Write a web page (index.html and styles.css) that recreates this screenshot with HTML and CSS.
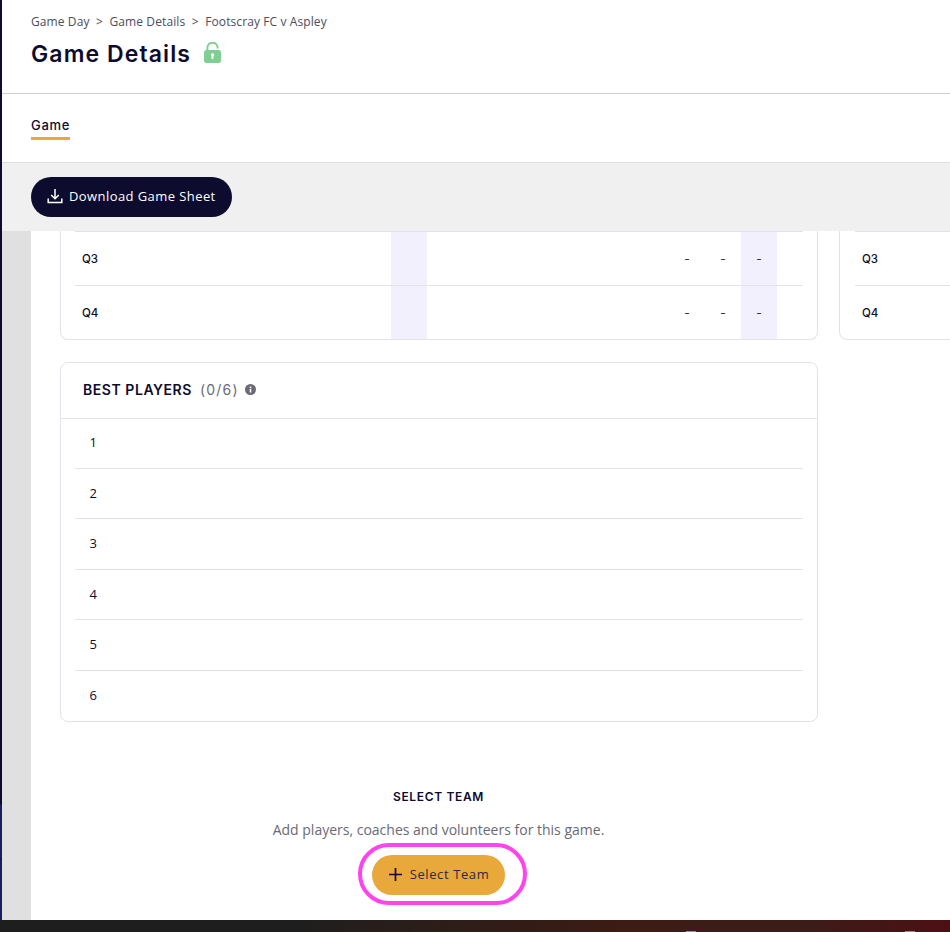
FILE: index.html
```html
<!DOCTYPE html>
<html lang="en">
<head>
<meta charset="utf-8">
<title>Game Details</title>
<link rel="stylesheet" href="styles.css">
</head>
<body>
<div class="window">
  <div class="rail"></div>
  <main class="page">
    <header class="head">
      <nav class="crumbs"><span>Game Day</span><span class="sep">&gt;</span><span>Game Details</span><span class="sep">&gt;</span><span>Footscray FC v Aspley</span></nav>
      <div class="title-row">
        <h1>Game Details</h1>
        <svg class="lock" width="17" height="21" viewBox="0 0 17 21"><path d="M3.4 9V5.8a5.1 5.1 0 0 1 10.2 0V6.5" fill="none" stroke="#7fcf92" stroke-width="2"/><rect x="0" y="8" width="17" height="13" rx="2.5" fill="#7fcf92"/><circle cx="8.5" cy="13" r="1.7" fill="#fff"/><rect x="7.6" y="13" width="1.8" height="4" fill="#fff"/></svg>
      </div>
    </header>
    <div class="tabs"><span class="tab">Game</span></div>
    <div class="toolbar">
      <button class="btn-dark">
        <svg width="16" height="16" viewBox="0 0 16 16" fill="none" stroke="#fff" stroke-width="1.5"><path d="M8 1v9.5M4.2 7 8 10.7 11.8 7M1.2 10.5v4h13.6v-4"/></svg>
        Download Game Sheet
      </button>
    </div>
    <div class="content">
      <div class="gutter"></div>
      <div class="scroll">
        <div class="top-cards">
          <section class="card card-clip score">
            <div class="hl hl-a"></div>
            <div class="hl hl-b"></div>
            <div class="q-row"><b>Q3</b><i>-</i><i>-</i><i>-</i></div>
            <div class="q-row"><b>Q4</b><i>-</i><i>-</i><i>-</i></div>
          </section>
          <section class="card card-clip score-right">
            <div class="q-row"><b>Q3</b></div>
            <div class="q-row"><b>Q4</b></div>
          </section>
        </div>
        <section class="card best">
          <div class="best-head">
            <h2>BEST PLAYERS</h2><span class="count">(0/6)</span>
            <svg width="11" height="11" viewBox="0 0 11 11"><circle cx="5.5" cy="5.5" r="5.5" fill="#6a6a76"/><rect x="4.7" y="4.7" width="1.6" height="3.8" fill="#fff"/><rect x="4.7" y="2.5" width="1.6" height="1.5" fill="#fff"/></svg>
          </div>
          <ol class="best-list">
            <li>1</li><li>2</li><li>3</li><li>4</li><li>5</li><li>6</li>
          </ol>
        </section>
        <section class="select">
          <h3>SELECT TEAM</h3>
          <p>Add players, coaches and volunteers for this game.</p>
          <div class="cta">
            <button class="btn-gold">
              <svg width="15" height="15" viewBox="0 0 15 15" stroke="#0d0c2e" stroke-width="1.7"><path d="M7.5 1v13M1 7.5h13"/></svg>
              Select Team
            </button>
            <div class="ring"></div>
          </div>
        </section>
      </div>
    </div>
  </main>
</div>
<div class="taskbar"><span class="spot spot-a"></span><span class="spot spot-b"></span></div>
</body>
</html>
```
FILE: styles.css
```css
* { box-sizing: border-box; }
html, body { margin: 0; height: 932px; overflow: hidden; background: #fff; }
body { font-family: "Open Sans", "Noto Sans", sans-serif; color: #0d0c2e; }
.window { display: flex; height: 920px; }
.rail { width: 2px; flex: none; background: linear-gradient(#0d0c2e 0, #0d0c2e 804px, #1e1e5c 805px, #1e1e5c 858px, #12123c 859px, #1e1e5c 860px); }
.page { flex: 1; min-width: 0; display: flex; flex-direction: column; }
.head { height: 94px; border-bottom: 1px solid #cfcfcf; padding: 14px 0 0 29px; }
.crumbs { display: flex; font-size: 12px; line-height: 16px; letter-spacing: .1px; color: #4c4c5c; }
.sep { margin: 0 6.5px; }
.title-row { display: flex; align-items: center; gap: 13px; margin-top: 8px; }
h1 { margin: 0; font: 600 23px/32px Inter, sans-serif; letter-spacing: 1.1px; }
.lock { margin-top: -3px; }
.tabs { height: 69px; border-bottom: 1px solid #dedede; padding: 19px 0 0 29px; }
.tab { display: inline-block; font: 500 13px/18px Inter, sans-serif; letter-spacing: .7px; padding-bottom: 3px; border-bottom: 3px solid #e9a83a; }
.toolbar { height: 68px; background: #f0f0f0; padding: 14px 0 0 29px; }
.btn-dark { display: flex; align-items: center; gap: 6px; height: 40px; width: 201px; padding: 0 0 2px 16px; border: 0; border-radius: 20px; background: #0d0c2e; color: #fff; font: 500 13px "Open Sans", sans-serif; letter-spacing: .42px; }
.content { flex: 1; min-height: 0; display: flex; }
.gutter { width: 29px; flex: none; background: #e0e0e0; }
.scroll { flex: 1; min-width: 0; overflow: hidden; padding: 0 0 0 29px; }
.top-cards { display: flex; gap: 21px; width: 1000px; }
.card { border: 1px solid #e2e2ea; border-radius: 8px; background: #fff; }
.card-clip { position: relative; border-top: 0; border-top-left-radius: 0; border-top-right-radius: 0; height: 109px; padding: 0 14px; }
.score { width: 758px; flex: none; }
.score-right { flex: 1; padding-left: 15px; }
.hl { position: absolute; top: 0; bottom: 0; width: 36px; background: #f2f0fc; }
.hl-a { left: 330px; }
.hl-b { left: 680px; }
.q-row { position: relative; display: flex; align-items: center; height: 54px; border-top: 1px solid #e2e2ea; padding-left: 7px; }
.q-row b { font: 500 11.5px Inter, sans-serif; width: 610px; margin-right: -23px; }
.q-row i { font: 400 12px Inter, sans-serif; width: 36px; text-align: center; color: #333; }
.best { width: 758px; height: 360px; margin-top: 22px; }
.best-head { display: flex; align-items: center; height: 56px; border-bottom: 1px solid #e2e2ea; padding: 0 0 2px 22px; }
h2 { margin: 0; font: 600 14px Inter, sans-serif; letter-spacing: .55px; }
.count { margin: 0 6px 0 8px; font: 400 14px Inter, sans-serif; letter-spacing: 1.2px; color: #6a6a76; }
.best-list { list-style: none; margin: 0; padding: 0 14px; }
.best-list li { height: 50.5px; padding-left: 14.5px; font: 400 13px/48px "Open Sans", sans-serif; border-top: 1px solid #e2e2ea; }
.best-list li:first-child { height: 48.5px; line-height: 46px; border-top: 0; }
.select { width: 757px; text-align: center; padding-top: 67px; }
h3 { margin: 0; font: 600 12px/16px Inter, sans-serif; letter-spacing: .65px; }
.select p { margin: 16px 0 0; font-size: 14px; line-height: 18px; color: #6a6a76; }
.cta { position: relative; width: 133px; margin: 16px auto 0; }
.btn-gold { display: flex; align-items: center; justify-content: center; gap: 7px; width: 133px; height: 40px; padding: 0 0 2px; border: 0; border-radius: 20px; background: #e9a83a; color: #2d2a3c; font: 400 13px "Open Sans", sans-serif; letter-spacing: .6px; }
.ring { position: absolute; left: -14px; top: -12px; width: 169px; height: 62px; border: 4px solid #ff44ee; border-radius: 31px; }
.taskbar { position: relative; height: 12px; background: linear-gradient(90deg, #1e1e1e 0, #1e1e1e 30%, #3c1c14 65%, #3c1c18 85%, #4d1014 100%); }
.spot { position: absolute; bottom: 0; height: 1px; }
.spot-a { left: 686px; width: 10px; background: #35b8d8; }
.spot-b { left: 905px; width: 10px; background: #9a8a8a; }
```
